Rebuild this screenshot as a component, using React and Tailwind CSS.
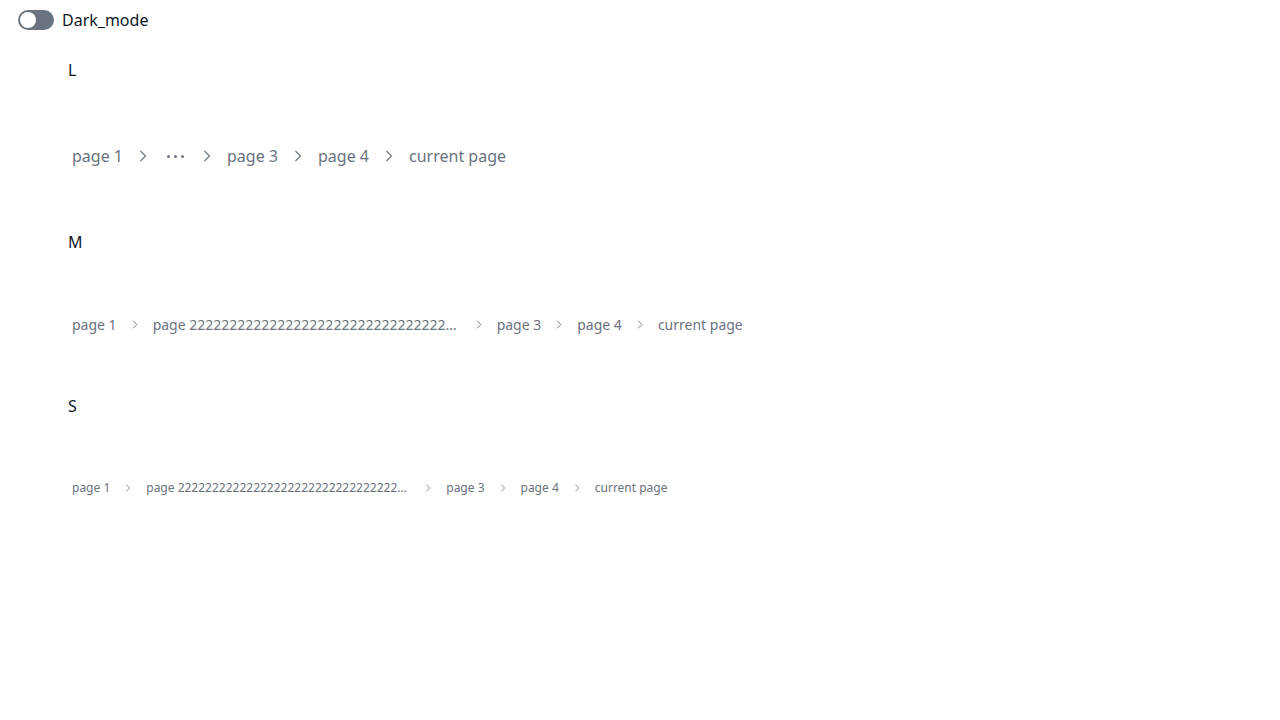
import { useState } from 'react';

const long = 'page ' + '2'.repeat(60);

const Chevron = ({ className }) => (
  <svg viewBox="0 0 8 12" fill="none" stroke="currentColor" strokeWidth="1.2" className={className}>
    <path d="M1.5 1l5 5-5 5" />
  </svg>
);

const sizes = {
  L: { text: 'text-[16px] h-6', sep: 'w-[8px] h-[12px] mx-[12px]', max: 'max-w-[310px]' },
  M: { text: 'text-[14px] h-4', sep: 'w-[6px] h-[9px] mx-[11px]', max: 'max-w-[316px]' },
  S: { text: 'text-[12px] h-4', sep: 'w-[6px] h-[8px] mx-[11px]', max: 'max-w-[272px]' },
};

const Breadcrumb = ({ size, items }) => {
  const s = sizes[size];
  return (
    <nav className={`flex items-center text-[#6b7280] ${s.text}`}>
      {items.map((it, i) => (
        <div key={i} className="flex items-center">
          {i > 0 && <Chevron className={`${s.sep} text-[#6b7280] shrink-0`} />}
          {it === '...' ? (
            <span className="flex items-center justify-center w-[32px] gap-[4px]">
              <span className="w-[3px] h-[3px] rounded-full bg-[#6b7280]" />
              <span className="w-[3px] h-[3px] rounded-full bg-[#6b7280]" />
              <span className="w-[3px] h-[3px] rounded-full bg-[#6b7280]" />
            </span>
          ) : (
            <span className={`px-1 whitespace-nowrap overflow-hidden text-ellipsis ${it.startsWith('page 22') ? s.max : ''}`}>
              {it}
            </span>
          )}
        </div>
      ))}
    </nav>
  );
};

export default function App() {
  const [dark, setDark] = useState(false);
  return (
    <div className="min-h-[720px] bg-white" style={{ fontFamily: '"Noto Sans", sans-serif' }}>
      <div className="flex items-center pl-[18px] pt-[10px] gap-2">
        <button
          onClick={() => setDark(!dark)}
          className="w-[36px] h-[20px] rounded-full bg-[#6b7280] flex items-center px-[2px]"
        >
          <span className="w-[16px] h-[16px] rounded-full bg-white" />
        </button>
        <span className="text-[16px] leading-5 text-[#111827]">Dark_mode</span>
      </div>

      <div className="pl-[68px] mt-[30px] flex flex-col gap-16">
        <div className="text-[16px] leading-5 text-[#111827]">L</div>
        <Breadcrumb size="L" items={['page 1', '...', 'page 3', 'page 4', 'current page']} />
        <div className="text-[16px] leading-5 text-[#111827]">M</div>
        <Breadcrumb size="M" items={['page 1', long, 'page 3', 'page 4', 'current page']} />
        <div className="text-[16px] leading-5 text-[#111827]">S</div>
        <Breadcrumb size="S" items={['page 1', long, 'page 3', 'page 4', 'current page']} />
      </div>
    </div>
  );
}
